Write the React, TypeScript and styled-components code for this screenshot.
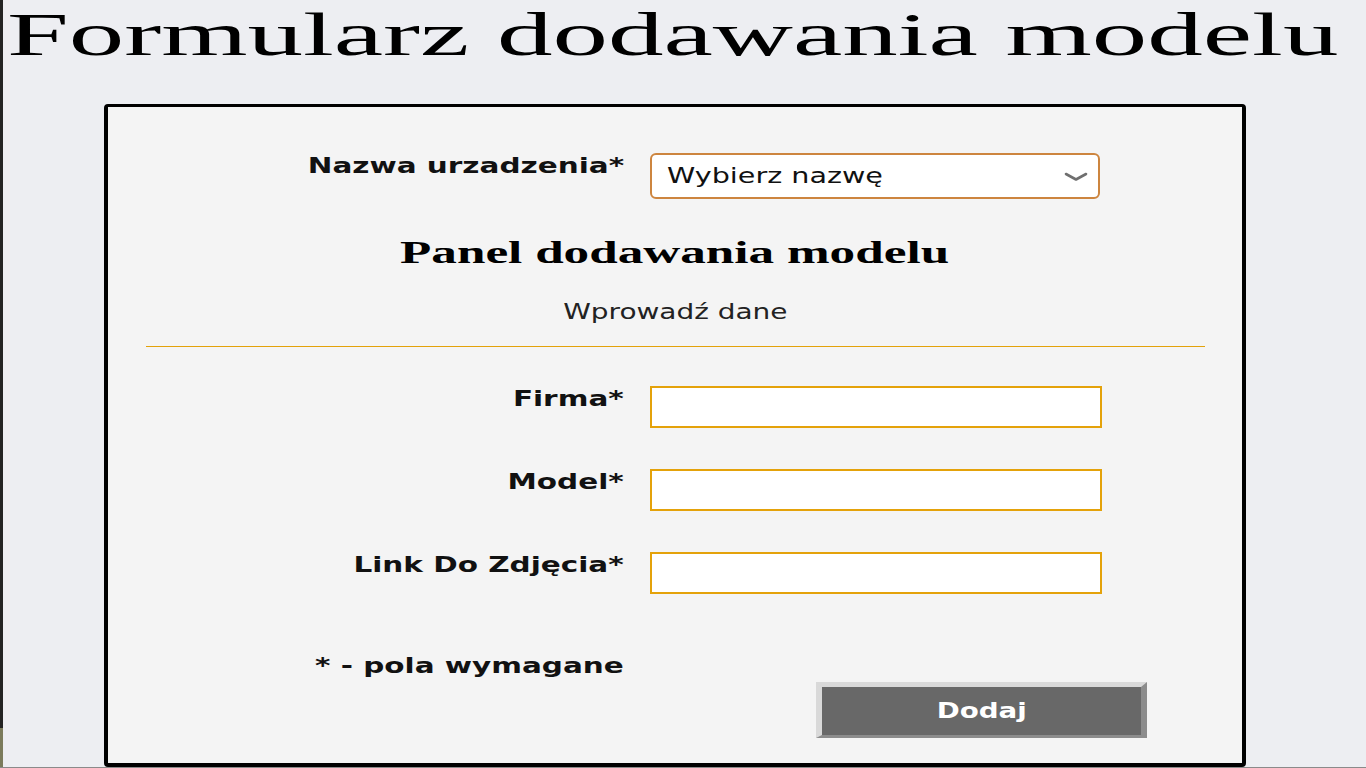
import React from "react";
import styled, { createGlobalStyle } from "styled-components";

const GlobalStyle = createGlobalStyle`
  html, body { margin: 0; padding: 0; }
  body {
    background: #edeef2;
    font-family: "DejaVu Sans", Verdana, sans-serif;
  }
  * { box-sizing: border-box; }
`;

const Page = styled.div`
  height: 768px;
  padding-left: 3px;
  background:
    linear-gradient(to bottom, #232323 0, #232323 728px, #7b7b5c 728px) left top / 3px 100% no-repeat,
    #edeef2;
  border-bottom: 1px solid #8a8a8a;
  overflow: hidden;
`;

const Wide = styled.span<{ $sx: number; $origin?: string }>`
  display: inline-block;
  white-space: nowrap;
  transform: scaleX(${(p) => p.$sx});
  transform-origin: ${(p) => p.$origin ?? "left center"};
`;

const Title = styled.h1`
  margin: 0;
  padding-left: 4px;
  height: 69px;
  font-family: "Liberation Serif", "Times New Roman", serif;
  font-weight: normal;
  font-size: 62px;
  line-height: 69px;
  color: #000;
`;

const Card = styled.section`
  margin: 35px 0 0 101px;
  width: 1142px;
  height: 663px;
  border: solid #000;
  border-width: 3px 4px 4px 4px;
  border-radius: 4px;
  background: #f4f4f4;
  padding-top: 46px;
  display: flex;
  flex-direction: column;
`;

const FieldRow = styled.div`
  display: grid;
  grid-template-columns: 516px 452px;
  column-gap: 26px;
  align-items: start;
`;

const Label = styled.label`
  text-align: right;
  font-family: "DejaVu Sans", Verdana, sans-serif;
  font-weight: bold;
  font-size: 22px;
  line-height: 26px;
  color: #111;
`;

const SelectBox = styled.div`
  width: 450px;
  height: 46px;
  border: 2px solid #cd853f;
  border-radius: 6px;
  background: #fff;
  display: flex;
  align-items: center;
  justify-content: space-between;
  padding: 0 10px 0 15px;
  font-size: 22px;
  line-height: 26px;
  color: #111;
`;

const Chevron = styled.svg`
  flex: none;
  display: block;
`;

const Heading = styled.h2`
  margin: 35px 0 0;
  text-align: center;
  font-family: "Liberation Serif", "Times New Roman", serif;
  font-weight: bold;
  font-size: 32px;
  line-height: 36px;
  color: #000;
`;

const Subheading = styled.p`
  margin: 30px 0 0;
  text-align: center;
  font-size: 21px;
  line-height: 24px;
  color: #222;
`;

const Divider = styled.hr`
  margin: 22px 37px 0 38px;
  height: 1px;
  border: 0;
  background: #e3a20a;
`;

const Fields = styled.div`
  margin-top: 39px;
  display: flex;
  flex-direction: column;
  gap: 41px;
`;

const TextInput = styled.input`
  width: 452px;
  height: 42px;
  border: 2px solid #e4a20a;
  background: #fff;
  outline: none;
  font-size: 20px;
  padding: 0 8px;
`;

const Footnote = styled.p`
  margin: 59px 0 0;
  padding-left: 207px;
  font-weight: bold;
  font-size: 22px;
  line-height: 26px;
  color: #111;
`;

const ButtonRow = styled.div`
  margin-top: 3px;
  display: flex;
  padding-left: 708px;
`;

const SubmitButton = styled.button`
  width: 331px;
  height: 56px;
  border-style: solid;
  border-width: 5px 6px 3px 6px;
  border-color: #d9d9d9 #8c8c8c #8c8c8c #d9d9d9;
  background: #686868;
  color: #fff;
  font-family: "DejaVu Sans", Verdana, sans-serif;
  font-weight: bold;
  font-size: 22px;
  line-height: 26px;
  padding: 0;
  display: flex;
  align-items: center;
  justify-content: center;
`;

const fields = ["Firma*", "Model*", "Link Do Zdjęcia*"];

export default function App() {
  return (
    <>
      <GlobalStyle />
      <Page>
        <Title>
          <Wide $sx={1.79}>Formularz dodawania modelu</Wide>
        </Title>
        <Card>
          <FieldRow>
            <Label>
              <Wide $sx={1.34} $origin="right center">
                Nazwa urzadzenia*
              </Wide>
            </Label>
            <SelectBox>
              <Wide $sx={1.3}>Wybierz nazwę</Wide>
              <Chevron width="24" height="9" viewBox="0 0 24 9">
                <path
                  d="M2 2 L12 7.5 L22 2"
                  fill="none"
                  stroke="#6f6f6f"
                  strokeWidth="2.6"
                  strokeLinecap="round"
                  strokeLinejoin="round"
                />
              </Chevron>
            </SelectBox>
          </FieldRow>
          <Heading>
            <Wide $sx={1.6} $origin="center center">
              Panel dodawania modelu
            </Wide>
          </Heading>
          <Subheading>
            <Wide $sx={1.33} $origin="center center">
              Wprowadź dane
            </Wide>
          </Subheading>
          <Divider />
          <Fields>
            {fields.map((f) => (
              <FieldRow key={f}>
                <Label>
                  <Wide $sx={1.34} $origin="right center">
                    {f}
                  </Wide>
                </Label>
                <TextInput type="text" />
              </FieldRow>
            ))}
          </Fields>
          <Footnote>
            <Wide $sx={1.34}>* - pola wymagane</Wide>
          </Footnote>
          <ButtonRow>
            <SubmitButton type="button">
              <Wide $sx={1.26} $origin="center center">
                Dodaj
              </Wide>
            </SubmitButton>
          </ButtonRow>
        </Card>
      </Page>
    </>
  );
}
